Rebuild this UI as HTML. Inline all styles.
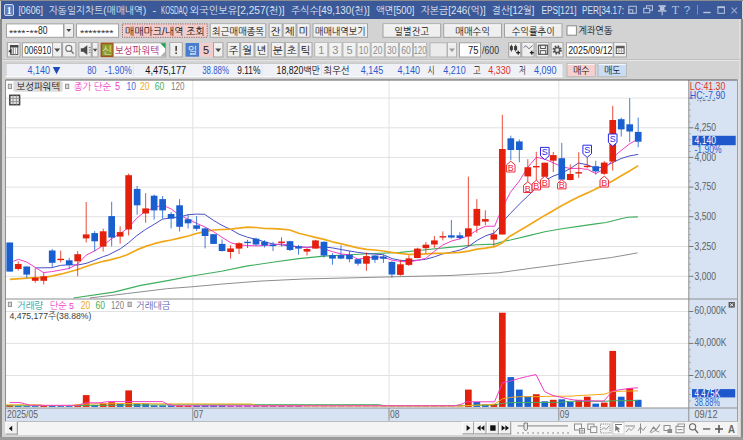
<!DOCTYPE html>
<html lang="ko"><head><meta charset="utf-8"><title>[0606] 자동일지차트(매매내역)</title>
<style>
html,body{margin:0;padding:0;background:#d3d3d3;overflow:hidden}
svg{display:block;font-family:'Liberation Sans','NanumGothic','Noto Sans CJK KR',sans-serif;}
text{white-space:pre}
</style></head><body>
<svg width="743" height="440" viewBox="0 0 743 440">
<rect x="0.00" y="0.00" width="743.00" height="440.00" fill="#d3d3d3" />
<rect x="0.00" y="0.00" width="743.00" height="1.00" fill="#8c8c8c" />
<rect x="1.00" y="1.00" width="741.00" height="18.00" fill="#3b5998" />
<rect x="0.00" y="19.00" width="2.00" height="421.00" fill="#8a8a8a" />
<rect x="739.40" y="19.00" width="1.40" height="418.00" fill="#e6e6e6" />
<rect x="740.80" y="19.00" width="2.20" height="421.00" fill="#8a8a8a" />
<rect x="0.00" y="437.00" width="743.00" height="3.00" fill="#9a9a9a" />
<rect x="4.50" y="4.50" width="9.00" height="11.00" fill="#5f7fc0" stroke="#c9d4ec" stroke-width="1" rx="1.5"/>
<text x="9.00" y="13.80" font-size="9.5" fill="#ffffff" text-anchor="middle" font-weight="bold" font-family="Liberation Serif,serif">1</text>
<text x="18.40" y="14.00" font-size="11" fill="#dde3f1" textLength="24.60" lengthAdjust="spacingAndGlyphs" >[0606]</text>
<text x="48.70" y="14.00" font-size="10.23" fill="#dde3f1" textLength="97.50" lengthAdjust="spacingAndGlyphs" >자동일지차트(매매내역)</text>
<text x="152.50" y="14.00" font-size="11" fill="#dde3f1" >-</text>
<text x="161.00" y="14.00" font-size="11" fill="#dde3f1" textLength="26.50" lengthAdjust="spacingAndGlyphs" >KOSDAQ</text>
<text x="189.70" y="14.00" font-size="10.23" fill="#dde3f1" textLength="95.00" lengthAdjust="spacingAndGlyphs" >외국인보유[2,257(천)]</text>
<text x="291.00" y="14.00" font-size="10.23" fill="#dde3f1" textLength="78.70" lengthAdjust="spacingAndGlyphs" >주식수[49,130(천)]</text>
<text x="375.70" y="14.00" font-size="10.23" fill="#dde3f1" textLength="38.80" lengthAdjust="spacingAndGlyphs" >액면[500]</text>
<text x="420.70" y="14.00" font-size="10.23" fill="#dde3f1" textLength="65.00" lengthAdjust="spacingAndGlyphs" >자본금[246(억)]</text>
<text x="492.00" y="14.00" font-size="10.23" fill="#dde3f1" textLength="42.50" lengthAdjust="spacingAndGlyphs" >결산[12월]</text>
<text x="541.50" y="14.00" font-size="11" fill="#dde3f1" textLength="35.00" lengthAdjust="spacingAndGlyphs" >EPS[121]</text>
<text x="582.00" y="14.00" font-size="11" fill="#dde3f1" textLength="42.00" lengthAdjust="spacingAndGlyphs" >PER[34.17:</text>
<rect x="628.80" y="6.30" width="7.50" height="7.00" fill="none" stroke="#b7c3de" stroke-width="1" />
<rect x="628.80" y="9.80" width="4.00" height="3.50" fill="none" stroke="#b7c3de" stroke-width="1" />
<rect x="646.50" y="5.80" width="6.00" height="4.50" fill="none" stroke="#b7c3de" stroke-width="1" />
<rect x="643.70" y="8.30" width="6.00" height="4.50" fill="#3b5998" stroke="#b7c3de" stroke-width="1" />
<rect x="658.60" y="5.20" width="7.20" height="1.70" fill="#b7c3de" />
<rect x="659.90" y="6.90" width="4.60" height="3.40" fill="#b7c3de" />
<rect x="658.00" y="10.20" width="8.40" height="1.50" fill="#b7c3de" />
<line x1="662.20" y1="11.50" x2="662.20" y2="15.20" stroke="#b7c3de" stroke-width="1.1" />
<text x="675.30" y="14.20" font-size="12" fill="#b7c3de" text-anchor="middle" font-family="Liberation Serif,serif">T</text>
<text x="687.00" y="14.00" font-size="11.5" fill="#b7c3de" text-anchor="middle" >?</text>
<line x1="697.50" y1="5.00" x2="697.50" y2="14.60" stroke="#7d90bd" stroke-width="1" />
<rect x="703.30" y="11.80" width="7.40" height="1.40" fill="#b7c3de" />
<rect x="717.90" y="7.00" width="6.50" height="6.30" fill="none" stroke="#b7c3de" stroke-width="1" />
<rect x="717.40" y="6.50" width="7.50" height="1.60" fill="#b7c3de" />
<line x1="731.50" y1="7.60" x2="737.00" y2="13.40" stroke="#9aaad0" stroke-width="1.1" />
<line x1="737.00" y1="7.60" x2="731.50" y2="13.40" stroke="#9aaad0" stroke-width="1.1" />
<rect x="6.50" y="23.90" width="57.00" height="13.40" fill="#ffffff" stroke="#a2a2a2" stroke-width="1" />
<text x="9.00" y="35.60" font-size="9.5" fill="#333" textLength="16.50" lengthAdjust="spacingAndGlyphs" >****</text>
<text x="26.00" y="33.60" font-size="10" fill="#333" >-</text>
<text x="29.60" y="35.60" font-size="9.5" fill="#333" textLength="8.20" lengthAdjust="spacingAndGlyphs" >**</text>
<text x="38.00" y="33.80" font-size="11" fill="#222" textLength="9.50" lengthAdjust="spacingAndGlyphs" >80</text>
<rect x="64.00" y="23.90" width="9.50" height="13.40" fill="#efefef" stroke="#a2a2a2" stroke-width="1" />
<line x1="64.70" y1="24.90" x2="72.80" y2="24.90" stroke="#fbfbfb" stroke-width="1" />
<polygon points="66.3,29.0 71.3,29.0 68.8,32.0" fill="#444" />
<rect x="76.50" y="23.90" width="42.00" height="13.40" fill="#ffffff" stroke="#a2a2a2" stroke-width="1" />
<text x="80.00" y="35.60" font-size="9.5" fill="#333" textLength="33.50" lengthAdjust="spacingAndGlyphs" >********</text>
<rect x="122.50" y="23.90" width="84.70" height="13.40" fill="#f3cccc" stroke="#8a6666" stroke-width="1" stroke-dasharray="1.2,1.2"/>
<text x="164.85" y="34.56" font-size="10.23" fill="#111" text-anchor="middle" textLength="80.00" lengthAdjust="spacingAndGlyphs" >매매마크/내역 조회</text>
<rect x="210.20" y="23.90" width="55.60" height="13.40" fill="#efefef" stroke="#a2a2a2" stroke-width="1" />
<line x1="210.90" y1="24.90" x2="265.10" y2="24.90" stroke="#fbfbfb" stroke-width="1" />
<text x="238.00" y="34.56" font-size="10.23" fill="#111" text-anchor="middle" textLength="52.00" lengthAdjust="spacingAndGlyphs" >최근매매종목</text>
<rect x="269.10" y="23.90" width="13.00" height="13.40" fill="#efefef" stroke="#a2a2a2" stroke-width="1" />
<line x1="269.80" y1="24.90" x2="281.40" y2="24.90" stroke="#fbfbfb" stroke-width="1" />
<text x="275.60" y="34.56" font-size="10.23" fill="#111" text-anchor="middle" textLength="10.00" lengthAdjust="spacingAndGlyphs" >잔</text>
<rect x="283.10" y="23.90" width="12.90" height="13.40" fill="#efefef" stroke="#a2a2a2" stroke-width="1" />
<line x1="283.80" y1="24.90" x2="295.30" y2="24.90" stroke="#fbfbfb" stroke-width="1" />
<text x="289.55" y="34.56" font-size="10.23" fill="#111" text-anchor="middle" textLength="10.00" lengthAdjust="spacingAndGlyphs" >체</text>
<rect x="297.00" y="23.90" width="13.00" height="13.40" fill="#efefef" stroke="#a2a2a2" stroke-width="1" />
<line x1="297.70" y1="24.90" x2="309.30" y2="24.90" stroke="#fbfbfb" stroke-width="1" />
<text x="303.50" y="34.56" font-size="10.23" fill="#111" text-anchor="middle" textLength="10.00" lengthAdjust="spacingAndGlyphs" >미</text>
<rect x="313.00" y="23.90" width="54.50" height="13.40" fill="#efefef" stroke="#a2a2a2" stroke-width="1" />
<line x1="313.70" y1="24.90" x2="366.80" y2="24.90" stroke="#fbfbfb" stroke-width="1" />
<text x="340.25" y="34.56" font-size="10.23" fill="#111" text-anchor="middle" textLength="51.00" lengthAdjust="spacingAndGlyphs" >매매내역보기</text>
<rect x="383.00" y="23.90" width="57.70" height="13.40" fill="#efefef" stroke="#a2a2a2" stroke-width="1" />
<line x1="383.70" y1="24.90" x2="440.00" y2="24.90" stroke="#fbfbfb" stroke-width="1" />
<text x="411.85" y="34.56" font-size="10.23" fill="#111" text-anchor="middle" textLength="35.00" lengthAdjust="spacingAndGlyphs" >일별잔고</text>
<rect x="443.70" y="23.90" width="57.80" height="13.40" fill="#efefef" stroke="#a2a2a2" stroke-width="1" />
<line x1="444.40" y1="24.90" x2="500.80" y2="24.90" stroke="#fbfbfb" stroke-width="1" />
<text x="472.60" y="34.56" font-size="10.23" fill="#111" text-anchor="middle" textLength="35.00" lengthAdjust="spacingAndGlyphs" >매매수익</text>
<rect x="504.50" y="23.90" width="57.50" height="13.40" fill="#efefef" stroke="#a2a2a2" stroke-width="1" />
<line x1="505.20" y1="24.90" x2="561.30" y2="24.90" stroke="#fbfbfb" stroke-width="1" />
<text x="533.25" y="34.56" font-size="10.23" fill="#111" text-anchor="middle" textLength="43.00" lengthAdjust="spacingAndGlyphs" >수익률추이</text>
<rect x="567.00" y="25.80" width="9.40" height="9.40" fill="#ffffff" stroke="#8a8a8a" stroke-width="1" />
<text x="578.20" y="34.00" font-size="10.23" fill="#111" textLength="34.30" lengthAdjust="spacingAndGlyphs" >계좌연동</text>
<rect x="7.30" y="42.80" width="12.70" height="14.20" fill="#efefef" stroke="#a2a2a2" stroke-width="1" />
<line x1="8.00" y1="43.80" x2="19.30" y2="43.80" stroke="#fbfbfb" stroke-width="1" />
<rect x="10.60" y="45.60" width="7.20" height="9.00" fill="#fbfbfb" stroke="#555" stroke-width="1" />
<rect x="10.10" y="45.10" width="8.20" height="2.40" fill="#444" />
<line x1="13.20" y1="47.50" x2="13.20" y2="54.60" stroke="#666" stroke-width="1" />
<line x1="15.50" y1="47.50" x2="15.50" y2="54.60" stroke="#999" stroke-width="0.8" />
<polygon points="8.3,51.2 11.6,48.6 11.6,53.8" fill="#333" />
<rect x="22.50" y="42.80" width="30.00" height="14.20" fill="#ffffff" stroke="#a2a2a2" stroke-width="1" />
<text x="24.30" y="53.90" font-size="11" fill="#222" textLength="27.00" lengthAdjust="spacingAndGlyphs" >006910</text>
<rect x="52.60" y="42.80" width="9.00" height="14.20" fill="#efefef" stroke="#a2a2a2" stroke-width="1" />
<line x1="53.30" y1="43.80" x2="60.90" y2="43.80" stroke="#fbfbfb" stroke-width="1" />
<polygon points="54.2,48.5 60.2,48.5 57.2,51.9" fill="#4a4a4a" />
<rect x="62.60" y="42.80" width="13.30" height="14.20" fill="#efefef" stroke="#a2a2a2" stroke-width="1" />
<line x1="63.30" y1="43.80" x2="75.20" y2="43.80" stroke="#fbfbfb" stroke-width="1" />
<circle cx="68.8" cy="48.4" r="3" fill="#fafafa" stroke="#7d7d7d" stroke-width="1.2"/>
<line x1="71.00" y1="50.80" x2="73.60" y2="53.80" stroke="#7d7d7d" stroke-width="1.6" />
<rect x="78.90" y="42.80" width="12.30" height="14.20" fill="#efefef" stroke="#a2a2a2" stroke-width="1" />
<line x1="79.60" y1="43.80" x2="90.50" y2="43.80" stroke="#fbfbfb" stroke-width="1" />
<polygon points="80.8,48.3 83.3,48.3 87.3,45.2 87.3,54.9 83.3,51.8 80.8,51.8" fill="#4a4a4a" />
<line x1="88.80" y1="47.60" x2="90.60" y2="47.60" stroke="#777" stroke-width="1" />
<line x1="88.80" y1="50.00" x2="90.60" y2="50.00" stroke="#777" stroke-width="1" />
<line x1="88.80" y1="52.40" x2="90.60" y2="52.40" stroke="#777" stroke-width="1" />
<rect x="92.20" y="42.80" width="5.80" height="14.20" fill="#efefef" stroke="#a2a2a2" stroke-width="1" />
<line x1="92.90" y1="43.80" x2="97.30" y2="43.80" stroke="#fbfbfb" stroke-width="1" />
<polygon points="92.8,48.7 97.4,48.7 95.1,51.7" fill="#4a4a4a" />
<rect x="101.40" y="43.40" width="11.80" height="13.00" fill="#8c9c32" stroke="#a0521c" stroke-width="1.6" />
<text x="107.30" y="53.70" font-size="10.23" fill="#e2eab8" text-anchor="middle" >신</text>
<rect x="113.60" y="42.80" width="52.00" height="14.20" fill="#ffffff" stroke="#a2a2a2" stroke-width="1" />
<text x="115.00" y="53.80" font-size="10.23" fill="#a81860" textLength="44.00" lengthAdjust="spacingAndGlyphs" >보성파워텍</text>
<polygon points="160.3,43.3 165.3,43.3 165.3,48.5" fill="#19a04a" />
<polygon points="165.3,51.3 165.3,56.5 160.3,56.5" fill="#b4b4b4" />
<rect x="169.80" y="42.80" width="12.50" height="14.20" fill="#efefef" stroke="#a2a2a2" stroke-width="1" />
<line x1="170.50" y1="43.80" x2="181.60" y2="43.80" stroke="#fbfbfb" stroke-width="1" />
<rect x="175.40" y="46.00" width="1.50" height="5.20" fill="#333" />
<rect x="175.40" y="52.40" width="1.50" height="1.60" fill="#333" />
<text x="176.10" y="53.00" font-size="3" fill="#efefef" text-anchor="middle" >!</text>
<rect x="185.50" y="43.00" width="13.80" height="13.70" fill="#4a7ccc" />
<text x="192.40" y="53.70" font-size="10.04" fill="#ffffff" text-anchor="middle" >일</text>
<rect x="199.30" y="43.00" width="13.70" height="13.70" fill="#f3cccc" />
<text x="206.10" y="53.90" font-size="11" fill="#222" text-anchor="middle" >5</text>
<rect x="213.50" y="42.80" width="9.40" height="14.20" fill="#efefef" stroke="#a2a2a2" stroke-width="1" />
<line x1="214.20" y1="43.80" x2="222.20" y2="43.80" stroke="#fbfbfb" stroke-width="1" />
<polygon points="215.2,48.5 221.2,48.5 218.2,51.9" fill="#4a4a4a" />
<rect x="227.20" y="42.80" width="12.50" height="14.20" fill="#efefef" stroke="#a2a2a2" stroke-width="1" />
<line x1="227.90" y1="43.80" x2="239.00" y2="43.80" stroke="#fbfbfb" stroke-width="1" />
<text x="233.45" y="53.86" font-size="10.23" fill="#111" text-anchor="middle" textLength="10.00" lengthAdjust="spacingAndGlyphs" >주</text>
<rect x="240.70" y="42.80" width="13.30" height="14.20" fill="#efefef" stroke="#a2a2a2" stroke-width="1" />
<line x1="241.40" y1="43.80" x2="253.30" y2="43.80" stroke="#fbfbfb" stroke-width="1" />
<text x="247.35" y="53.86" font-size="10.23" fill="#111" text-anchor="middle" textLength="10.00" lengthAdjust="spacingAndGlyphs" >월</text>
<rect x="255.00" y="42.80" width="13.00" height="14.20" fill="#efefef" stroke="#a2a2a2" stroke-width="1" />
<line x1="255.70" y1="43.80" x2="267.30" y2="43.80" stroke="#fbfbfb" stroke-width="1" />
<text x="261.50" y="53.86" font-size="10.23" fill="#111" text-anchor="middle" textLength="10.00" lengthAdjust="spacingAndGlyphs" >년</text>
<rect x="271.30" y="42.80" width="13.00" height="14.20" fill="#efefef" stroke="#a2a2a2" stroke-width="1" />
<line x1="272.00" y1="43.80" x2="283.60" y2="43.80" stroke="#fbfbfb" stroke-width="1" />
<text x="277.80" y="53.86" font-size="10.23" fill="#111" text-anchor="middle" textLength="10.00" lengthAdjust="spacingAndGlyphs" >분</text>
<rect x="285.30" y="42.80" width="12.90" height="14.20" fill="#efefef" stroke="#a2a2a2" stroke-width="1" />
<line x1="286.00" y1="43.80" x2="297.50" y2="43.80" stroke="#fbfbfb" stroke-width="1" />
<text x="291.75" y="53.86" font-size="10.23" fill="#111" text-anchor="middle" textLength="10.00" lengthAdjust="spacingAndGlyphs" >초</text>
<rect x="299.20" y="42.80" width="12.80" height="14.20" fill="#efefef" stroke="#a2a2a2" stroke-width="1" />
<line x1="299.90" y1="43.80" x2="311.30" y2="43.80" stroke="#fbfbfb" stroke-width="1" />
<text x="305.60" y="53.86" font-size="10.23" fill="#111" text-anchor="middle" textLength="10.00" lengthAdjust="spacingAndGlyphs" >틱</text>
<rect x="314.70" y="42.80" width="13.12" height="14.20" fill="#f1f1f1" stroke="#b4b4b4" stroke-width="1" />
<line x1="315.40" y1="43.80" x2="327.12" y2="43.80" stroke="#fbfbfb" stroke-width="1" />
<text x="321.26" y="53.86" font-size="11" fill="#8c8c8c" text-anchor="middle" >1</text>
<rect x="328.82" y="42.80" width="13.12" height="14.20" fill="#f1f1f1" stroke="#b4b4b4" stroke-width="1" />
<line x1="329.52" y1="43.80" x2="341.24" y2="43.80" stroke="#fbfbfb" stroke-width="1" />
<text x="335.38" y="53.86" font-size="11" fill="#8c8c8c" text-anchor="middle" >3</text>
<rect x="342.94" y="42.80" width="13.12" height="14.20" fill="#f1f1f1" stroke="#b4b4b4" stroke-width="1" />
<line x1="343.64" y1="43.80" x2="355.36" y2="43.80" stroke="#fbfbfb" stroke-width="1" />
<text x="349.50" y="53.86" font-size="11" fill="#8c8c8c" text-anchor="middle" >5</text>
<rect x="357.06" y="42.80" width="13.12" height="14.20" fill="#f1f1f1" stroke="#b4b4b4" stroke-width="1" />
<line x1="357.76" y1="43.80" x2="369.48" y2="43.80" stroke="#fbfbfb" stroke-width="1" />
<text x="363.62" y="53.86" font-size="11" fill="#8c8c8c" text-anchor="middle" textLength="9.50" lengthAdjust="spacingAndGlyphs" >10</text>
<rect x="371.18" y="42.80" width="13.12" height="14.20" fill="#f1f1f1" stroke="#b4b4b4" stroke-width="1" />
<line x1="371.88" y1="43.80" x2="383.60" y2="43.80" stroke="#fbfbfb" stroke-width="1" />
<text x="377.74" y="53.86" font-size="11" fill="#8c8c8c" text-anchor="middle" textLength="9.50" lengthAdjust="spacingAndGlyphs" >20</text>
<rect x="385.30" y="42.80" width="13.12" height="14.20" fill="#f1f1f1" stroke="#b4b4b4" stroke-width="1" />
<line x1="386.00" y1="43.80" x2="397.72" y2="43.80" stroke="#fbfbfb" stroke-width="1" />
<text x="391.86" y="53.86" font-size="11" fill="#8c8c8c" text-anchor="middle" textLength="9.50" lengthAdjust="spacingAndGlyphs" >30</text>
<rect x="399.42" y="42.80" width="13.12" height="14.20" fill="#f1f1f1" stroke="#b4b4b4" stroke-width="1" />
<line x1="400.12" y1="43.80" x2="411.84" y2="43.80" stroke="#fbfbfb" stroke-width="1" />
<text x="405.98" y="53.86" font-size="11" fill="#8c8c8c" text-anchor="middle" textLength="9.50" lengthAdjust="spacingAndGlyphs" >60</text>
<rect x="413.54" y="42.80" width="13.12" height="14.20" fill="#f1f1f1" stroke="#b4b4b4" stroke-width="1" />
<line x1="414.24" y1="43.80" x2="425.96" y2="43.80" stroke="#fbfbfb" stroke-width="1" />
<text x="420.10" y="53.86" font-size="11" fill="#8c8c8c" text-anchor="middle" textLength="12.50" lengthAdjust="spacingAndGlyphs" >120</text>
<rect x="430.00" y="42.80" width="17.00" height="14.20" fill="#ebebeb" stroke="#b4b4b4" stroke-width="1" />
<rect x="447.50" y="42.80" width="9.00" height="14.20" fill="#eeeeee" stroke="#b4b4b4" stroke-width="1" />
<line x1="448.20" y1="43.80" x2="455.80" y2="43.80" stroke="#fbfbfb" stroke-width="1" />
<polygon points="449.0,48.5 455.0,48.5 452.0,51.9" fill="#9a9a9a" />
<rect x="459.50" y="42.80" width="21.00" height="14.20" fill="#ffffff" stroke="#a2a2a2" stroke-width="1" />
<text x="478.50" y="53.90" font-size="11" fill="#222" text-anchor="end" textLength="10.50" lengthAdjust="spacingAndGlyphs" >75</text>
<text x="482.00" y="53.90" font-size="11" fill="#333" textLength="17.00" lengthAdjust="spacingAndGlyphs" >/600</text>
<rect x="508.70" y="42.80" width="12.10" height="14.20" fill="#efefef" stroke="#a2a2a2" stroke-width="1" />
<line x1="509.40" y1="43.80" x2="520.10" y2="43.80" stroke="#fbfbfb" stroke-width="1" />
<rect x="521.80" y="42.80" width="12.20" height="14.20" fill="#efefef" stroke="#a2a2a2" stroke-width="1" />
<line x1="522.50" y1="43.80" x2="533.30" y2="43.80" stroke="#fbfbfb" stroke-width="1" />
<rect x="536.10" y="42.80" width="12.80" height="14.20" fill="#efefef" stroke="#a2a2a2" stroke-width="1" />
<line x1="536.80" y1="43.80" x2="548.20" y2="43.80" stroke="#fbfbfb" stroke-width="1" />
<rect x="551.10" y="42.80" width="11.90" height="14.20" fill="#efefef" stroke="#a2a2a2" stroke-width="1" />
<line x1="551.80" y1="43.80" x2="562.30" y2="43.80" stroke="#fbfbfb" stroke-width="1" />
<line x1="511.40" y1="44.70" x2="511.40" y2="51.60" stroke="#444" stroke-width="1" />
<rect x="509.90" y="46.10" width="3.00" height="4.00" fill="#3c3c3c" />
<line x1="515.60" y1="44.70" x2="515.60" y2="51.60" stroke="#444" stroke-width="1" />
<rect x="514.10" y="46.10" width="3.00" height="4.00" fill="#3c3c3c" />
<rect x="516.20" y="52.00" width="4.00" height="1.30" fill="#222" />
<rect x="517.55" y="50.65" width="1.30" height="4.00" fill="#222" />
<polyline points="523.6,47.6 526.0,45.6 528.9,48.8 532.6,45.6" fill="none" stroke="#6c7890" stroke-width="1" stroke-linejoin="round" />
<rect x="529.80" y="52.00" width="4.00" height="1.30" fill="#222" />
<rect x="531.15" y="50.65" width="1.30" height="4.00" fill="#222" />
<rect x="538.50" y="45.30" width="9.00" height="9.00" fill="#f2f2f2" stroke="#5a5a5a" stroke-width="1.3" />
<rect x="540.60" y="45.30" width="4.80" height="3.20" fill="#f2f2f2" stroke="#5a5a5a" stroke-width="1" />
<rect x="540.30" y="50.60" width="5.40" height="3.70" fill="#f2f2f2" stroke="#5a5a5a" stroke-width="1" />
<circle cx="557.2" cy="50" r="3.6" fill="none" stroke="#555" stroke-width="2.2" stroke-dasharray="1.5,1.33"/>
<circle cx="557.2" cy="50" r="2.6" fill="#e4e4e4" stroke="#555" stroke-width="1.5"/>
<rect x="566.50" y="42.80" width="46.70" height="14.20" fill="#ffffff" stroke="#a2a2a2" stroke-width="1" />
<text x="568.20" y="53.90" font-size="11" fill="#222" textLength="44.30" lengthAdjust="spacingAndGlyphs" >2025/09/12</text>
<rect x="613.70" y="42.80" width="12.80" height="14.20" fill="#efefef" stroke="#a2a2a2" stroke-width="1" />
<line x1="614.40" y1="43.80" x2="625.80" y2="43.80" stroke="#fbfbfb" stroke-width="1" />
<rect x="616.30" y="46.30" width="7.80" height="7.20" fill="#fafafa" stroke="#555" stroke-width="1" />
<rect x="616.30" y="46.30" width="7.80" height="2.00" fill="#555" />
<line x1="618.90" y1="48.30" x2="618.90" y2="53.50" stroke="#999" stroke-width="0.7" />
<line x1="621.50" y1="48.30" x2="621.50" y2="53.50" stroke="#999" stroke-width="0.7" />
<line x1="616.30" y1="50.90" x2="624.10" y2="50.90" stroke="#999" stroke-width="0.7" />
<line x1="2.00" y1="59.50" x2="740.00" y2="59.50" stroke="#bfbfbf" stroke-width="1" />
<line x1="2.00" y1="60.50" x2="740.00" y2="60.50" stroke="#e6e6e6" stroke-width="1" />
<rect x="5.50" y="62.90" width="557.00" height="14.30" fill="#f0f1f6" />
<line x1="5.50" y1="63.40" x2="562.50" y2="63.40" stroke="#c4c4c8" stroke-width="1" />
<line x1="6.00" y1="62.90" x2="6.00" y2="77.20" stroke="#c4c4c8" stroke-width="1" />
<line x1="5.50" y1="76.70" x2="562.50" y2="76.70" stroke="#fbfbfd" stroke-width="1" />
<text x="50.00" y="74.00" font-size="11" fill="#2a5bd0" text-anchor="end" textLength="22.50" lengthAdjust="spacingAndGlyphs" >4,140</text>
<polygon points="52.8,67.0 60.3,67.0 56.5,74.3" fill="#1f49b8" />
<text x="96.40" y="74.00" font-size="11" fill="#2a5bd0" text-anchor="end" textLength="9.20" lengthAdjust="spacingAndGlyphs" >80</text>
<text x="131.80" y="74.00" font-size="11" fill="#2a5bd0" text-anchor="end" textLength="27.00" lengthAdjust="spacingAndGlyphs" >-1.90%</text>
<line x1="133.50" y1="63.90" x2="133.50" y2="76.20" stroke="#dfe4ee" stroke-width="1" />
<text x="186.10" y="74.00" font-size="11" fill="#111" text-anchor="end" textLength="40.80" lengthAdjust="spacingAndGlyphs" >4,475,177</text>
<text x="229.00" y="74.00" font-size="11" fill="#2a5bd0" text-anchor="end" textLength="26.80" lengthAdjust="spacingAndGlyphs" >38.88%</text>
<text x="260.30" y="74.00" font-size="11" fill="#111" text-anchor="end" textLength="23.00" lengthAdjust="spacingAndGlyphs" >9.11%</text>
<line x1="262.00" y1="63.90" x2="262.00" y2="76.20" stroke="#dfe4ee" stroke-width="1" />
<text x="319.80" y="74.00" font-size="10.23" fill="#111" text-anchor="end" textLength="43.30" lengthAdjust="spacingAndGlyphs" >18,820백만</text>
<line x1="321.50" y1="63.90" x2="321.50" y2="76.20" stroke="#dfe4ee" stroke-width="1" />
<text x="323.50" y="74.00" font-size="10.23" fill="#111" textLength="26.30" lengthAdjust="spacingAndGlyphs" >최우선</text>
<text x="383.30" y="74.00" font-size="11" fill="#2a5bd0" text-anchor="end" textLength="22.50" lengthAdjust="spacingAndGlyphs" >4,145</text>
<text x="420.00" y="74.00" font-size="11" fill="#2a5bd0" text-anchor="end" textLength="22.50" lengthAdjust="spacingAndGlyphs" >4,140</text>
<text x="427.50" y="74.00" font-size="10.23" fill="#111" textLength="7.30" lengthAdjust="spacingAndGlyphs" >시</text>
<text x="465.80" y="74.00" font-size="11" fill="#2a5bd0" text-anchor="end" textLength="22.50" lengthAdjust="spacingAndGlyphs" >4,210</text>
<text x="473.20" y="74.00" font-size="10.23" fill="#111" textLength="7.50" lengthAdjust="spacingAndGlyphs" >고</text>
<text x="510.80" y="74.00" font-size="11" fill="#e0301e" text-anchor="end" textLength="22.50" lengthAdjust="spacingAndGlyphs" >4,330</text>
<text x="519.00" y="74.00" font-size="10.23" fill="#111" textLength="7.00" lengthAdjust="spacingAndGlyphs" >저</text>
<text x="556.60" y="74.00" font-size="11" fill="#2a5bd0" text-anchor="end" textLength="22.50" lengthAdjust="spacingAndGlyphs" >4,090</text>
<rect x="567.00" y="63.40" width="28.30" height="13.30" fill="#f6cfcf" stroke="#b9b9b9" stroke-width="1" />
<line x1="567.70" y1="64.40" x2="594.60" y2="64.40" stroke="#fbfbfb" stroke-width="1" />
<text x="581.15" y="74.01" font-size="10.23" fill="#111" text-anchor="middle" textLength="16.50" lengthAdjust="spacingAndGlyphs" >매수</text>
<rect x="598.00" y="63.40" width="28.50" height="13.30" fill="#c9dcf5" stroke="#b9b9b9" stroke-width="1" />
<line x1="598.70" y1="64.40" x2="625.80" y2="64.40" stroke="#fbfbfb" stroke-width="1" />
<text x="612.25" y="74.01" font-size="10.23" fill="#111" text-anchor="middle" textLength="16.50" lengthAdjust="spacingAndGlyphs" >매도</text>
<rect x="5.50" y="80.00" width="683.30" height="328.00" fill="#ffffff" />
<rect x="688.80" y="80.00" width="48.70" height="341.60" fill="#d7e3f2" />
<rect x="5.50" y="408.00" width="683.30" height="13.60" fill="#d7e3f2" />
<rect x="737.50" y="80.00" width="2.50" height="355.60" fill="#e0e0e0" />
<line x1="5.50" y1="98.10" x2="688.80" y2="98.10" stroke="#e2e2e2" stroke-width="1" />
<line x1="5.50" y1="127.80" x2="688.80" y2="127.80" stroke="#e2e2e2" stroke-width="1" />
<line x1="5.50" y1="157.40" x2="688.80" y2="157.40" stroke="#e2e2e2" stroke-width="1" />
<line x1="5.50" y1="187.10" x2="688.80" y2="187.10" stroke="#e2e2e2" stroke-width="1" />
<line x1="5.50" y1="216.70" x2="688.80" y2="216.70" stroke="#e2e2e2" stroke-width="1" />
<line x1="5.50" y1="246.50" x2="688.80" y2="246.50" stroke="#e2e2e2" stroke-width="1" />
<line x1="5.50" y1="276.30" x2="688.80" y2="276.30" stroke="#e2e2e2" stroke-width="1" />
<line x1="192.80" y1="80.00" x2="192.80" y2="408.00" stroke="#e2e2e2" stroke-width="1" />
<line x1="389.00" y1="80.00" x2="389.00" y2="408.00" stroke="#e2e2e2" stroke-width="1" />
<line x1="558.80" y1="80.00" x2="558.80" y2="408.00" stroke="#e2e2e2" stroke-width="1" />
<line x1="5.50" y1="311.50" x2="688.80" y2="311.50" stroke="#e2e2e2" stroke-width="1" />
<line x1="5.50" y1="343.40" x2="688.80" y2="343.40" stroke="#e2e2e2" stroke-width="1" />
<line x1="5.50" y1="375.50" x2="688.80" y2="375.50" stroke="#e2e2e2" stroke-width="1" />
<defs><clipPath id="pc"><rect x="5.5" y="80" width="683.3" height="219.0"/></clipPath><clipPath id="vc"><rect x="5.5" y="299.0" width="683.3" height="109.0"/></clipPath></defs>
<polyline points="89.6,298.0 127.3,293.5 167.7,288.6 191.9,286.8 221.5,284.1 260.0,281.1 303.8,279.0 357.7,277.7 390.0,276.9 450.0,275.5 498.5,272.8 530.8,268.3 557.7,264.8 584.6,261.0 611.5,257.5 637.5,252.9" fill="none" stroke="#8e8e8e" stroke-width="1" stroke-linejoin="round" clip-path="url(#pc)"/>
<polyline points="73.5,298.0 113.8,292.1 140.8,285.4 167.7,280.6 191.9,276.0 221.5,271.2 247.6,265.9 272.7,262.3 298.7,258.6 324.0,256.1 349.6,254.7 374.8,253.5 400.3,252.4 425.7,249.8 451.6,247.1 477.2,244.7 494.6,244.1 505.0,241.0 510.4,240.0 527.8,235.9 544.8,231.8 562.0,228.7 578.3,226.4 595.7,223.9 606.1,222.5 621.0,218.8 628.0,217.2 637.8,216.9" fill="none" stroke="#3fae5c" stroke-width="1.1" stroke-linejoin="round" clip-path="url(#pc)"/>
<polyline points="34.8,267.9 51.7,267.7 60.5,265.4 68.9,264.8 77.7,265.0 86.1,263.4 94.3,260.3 103.3,256.6 108.2,255.0 120.4,248.8 128.6,242.7 136.8,235.6 145.6,229.4 154.2,224.3 162.4,219.2 171.2,217.8 179.3,217.1 188.3,214.7 196.5,214.1 204.6,214.3 213.4,220.3 222.0,225.4 230.8,229.5 239.0,234.2 247.6,237.3 256.3,239.4 264.5,241.8 272.7,243.9 281.5,244.9 289.7,245.9 298.7,246.9 306.9,247.3 315.4,246.9 324.0,246.9 332.4,247.9 341.6,249.6 349.6,251.0 357.8,252.4 366.6,253.5 374.8,254.1 383.3,254.7 392.1,258.6 400.4,260.3 408.9,260.8 417.5,260.2 425.7,259.3 434.5,256.8 442.6,253.9 451.6,252.1 460.0,250.0 468.2,246.7 477.2,240.3 485.4,235.9 494.6,232.8 499.0,227.7 505.7,218.5 510.4,213.4 519.3,204.2 527.8,196.0 536.4,187.8 544.8,180.7 553.0,176.2 562.0,173.0 570.4,168.5 578.5,163.0 587.5,164.8 595.7,168.5 604.5,166.6 612.6,162.6 621.2,158.5 630.0,155.8 638.2,154.4" fill="none" stroke="#4a4fc8" stroke-width="1" stroke-linejoin="round" clip-path="url(#pc)"/>
<polyline points="9.8,279.3 26.6,278.1 43.5,277.3 51.7,276.1 60.5,274.2 68.9,272.0 77.7,269.5 86.1,266.5 94.3,263.8 103.3,261.3 110.0,259.9 120.0,257.2 126.6,255.0 136.8,249.9 145.6,246.4 154.2,243.7 162.4,241.7 171.2,240.0 179.3,238.2 188.3,236.0 196.5,233.5 204.6,231.6 213.4,230.0 222.0,229.5 230.8,229.1 239.0,228.1 247.6,227.1 256.3,227.5 264.5,228.5 272.7,228.7 281.5,229.1 289.7,230.0 298.7,233.2 306.9,235.3 315.4,237.3 324.0,239.4 332.4,241.8 341.6,243.9 349.6,245.9 357.8,247.9 366.6,249.4 374.8,250.0 383.3,251.0 392.1,252.4 400.3,253.5 408.9,254.3 417.5,254.3 425.7,253.9 434.5,253.3 442.6,253.3 451.6,252.9 460.0,252.3 468.2,251.2 477.2,249.2 485.4,248.2 494.6,246.7 502.0,243.1 505.7,239.6 510.4,235.9 519.3,230.8 527.8,225.7 536.4,220.6 544.8,215.4 553.0,210.7 562.0,205.6 570.4,201.1 578.3,197.0 587.5,192.9 595.7,188.9 604.5,185.0 612.6,181.0 621.2,175.8 630.0,170.7 638.2,165.6" fill="none" stroke="#f0a818" stroke-width="1.7" stroke-linejoin="round" clip-path="url(#pc)"/>
<polyline points="13.5,261.3 18.4,259.3 26.6,262.0 35.4,267.5 43.5,272.6 51.7,271.6 60.5,270.1 68.9,268.5 77.7,264.0 86.1,255.2 94.3,251.1 103.3,245.4 111.7,238.6 120.4,233.5 128.6,227.4 136.8,218.2 145.6,211.0 154.2,207.9 162.4,204.9 171.2,209.0 179.3,215.1 188.3,219.2 196.5,223.3 204.6,226.8 213.4,231.6 222.0,237.3 230.8,242.8 239.0,244.9 247.6,245.5 256.3,245.9 264.5,245.5 272.7,244.9 281.5,243.9 289.7,245.3 298.7,246.9 306.9,247.5 315.4,246.5 324.0,249.0 332.4,251.6 341.6,254.1 349.6,254.7 357.8,259.2 366.6,257.8 374.8,257.1 383.3,257.1 392.1,260.2 400.4,261.4 408.9,261.9 417.5,260.4 425.7,258.4 434.5,251.2 442.6,245.1 451.6,241.0 460.0,238.7 468.2,235.8 477.2,230.0 485.4,226.3 494.6,226.2 499.0,215.5 505.7,201.4 510.4,192.3 519.3,181.0 527.8,167.3 536.4,157.2 544.8,159.2 553.0,162.7 562.0,166.8 570.4,168.5 578.5,168.3 587.5,169.4 595.7,173.6 604.5,168.7 612.6,160.5 616.3,154.6 621.2,150.4 630.0,143.6 638.2,139.0" fill="none" stroke="#f03cc8" stroke-width="1" stroke-linejoin="round" clip-path="url(#pc)"/>
<line x1="9.75" y1="242.50" x2="9.75" y2="271.60" stroke="#1a5fd0" stroke-width="1" opacity="0.8"/>
<rect x="6.40" y="242.50" width="6.70" height="29.10" fill="#1a5fd0" />
<line x1="18.24" y1="261.30" x2="18.24" y2="270.50" stroke="#e4200c" stroke-width="1" opacity="0.8"/>
<rect x="14.89" y="264.00" width="6.70" height="5.00" fill="#e4200c" />
<line x1="26.74" y1="266.50" x2="26.74" y2="277.70" stroke="#1a5fd0" stroke-width="1" opacity="0.8"/>
<rect x="23.39" y="266.50" width="6.70" height="8.10" fill="#1a5fd0" />
<line x1="35.23" y1="268.50" x2="35.23" y2="282.80" stroke="#e4200c" stroke-width="1" opacity="0.8"/>
<rect x="31.88" y="277.70" width="6.70" height="3.10" fill="#e4200c" />
<line x1="43.72" y1="272.60" x2="43.72" y2="284.50" stroke="#e4200c" stroke-width="1" opacity="0.8"/>
<rect x="40.37" y="276.30" width="6.70" height="4.50" fill="#e4200c" />
<line x1="52.21" y1="249.00" x2="52.21" y2="267.50" stroke="#1a5fd0" stroke-width="1" opacity="0.8"/>
<rect x="48.86" y="250.50" width="6.70" height="12.30" fill="#1a5fd0" />
<line x1="60.71" y1="250.50" x2="60.71" y2="262.40" stroke="#e4200c" stroke-width="1" opacity="0.8"/>
<rect x="57.36" y="258.75" width="6.70" height="1.40" fill="#e4200c" />
<line x1="69.20" y1="257.90" x2="69.20" y2="269.10" stroke="#1a5fd0" stroke-width="1" opacity="0.8"/>
<rect x="65.85" y="260.30" width="6.70" height="4.70" fill="#1a5fd0" />
<line x1="77.69" y1="251.10" x2="77.69" y2="276.30" stroke="#e4200c" stroke-width="1" opacity="0.8"/>
<rect x="74.34" y="254.20" width="6.70" height="7.10" fill="#e4200c" />
<line x1="86.18" y1="202.00" x2="86.18" y2="242.50" stroke="#e4200c" stroke-width="1" opacity="0.8"/>
<rect x="82.83" y="234.40" width="6.70" height="4.00" fill="#e4200c" />
<line x1="94.68" y1="231.10" x2="94.68" y2="251.10" stroke="#1a5fd0" stroke-width="1" opacity="0.8"/>
<rect x="91.33" y="233.10" width="6.70" height="8.20" fill="#1a5fd0" />
<line x1="103.17" y1="228.60" x2="103.17" y2="251.50" stroke="#e4200c" stroke-width="1" opacity="0.8"/>
<rect x="99.82" y="231.30" width="6.70" height="15.30" fill="#e4200c" />
<line x1="111.66" y1="201.80" x2="111.66" y2="246.40" stroke="#1a5fd0" stroke-width="1" opacity="0.8"/>
<rect x="108.31" y="216.10" width="6.70" height="21.50" fill="#1a5fd0" />
<line x1="120.15" y1="226.30" x2="120.15" y2="243.70" stroke="#e4200c" stroke-width="1" opacity="0.8"/>
<rect x="116.80" y="232.10" width="6.70" height="4.50" fill="#e4200c" />
<line x1="128.65" y1="173.60" x2="128.65" y2="235.50" stroke="#e4200c" stroke-width="1" opacity="0.8"/>
<rect x="125.30" y="175.20" width="6.70" height="54.20" fill="#e4200c" />
<line x1="137.14" y1="186.00" x2="137.14" y2="214.70" stroke="#1a5fd0" stroke-width="1" opacity="0.8"/>
<rect x="133.79" y="188.90" width="6.70" height="16.40" fill="#1a5fd0" />
<line x1="145.63" y1="193.20" x2="145.63" y2="222.70" stroke="#e4200c" stroke-width="1" opacity="0.8"/>
<rect x="142.28" y="208.40" width="6.70" height="5.10" fill="#e4200c" />
<line x1="154.12" y1="194.60" x2="154.12" y2="219.60" stroke="#1a5fd0" stroke-width="1" opacity="0.8"/>
<rect x="150.77" y="195.70" width="6.70" height="14.70" fill="#1a5fd0" />
<line x1="162.62" y1="196.00" x2="162.62" y2="218.60" stroke="#1a5fd0" stroke-width="1" opacity="0.8"/>
<rect x="159.27" y="199.10" width="6.70" height="11.30" fill="#1a5fd0" />
<line x1="171.11" y1="212.00" x2="171.11" y2="228.40" stroke="#1a5fd0" stroke-width="1" opacity="0.8"/>
<rect x="167.76" y="214.00" width="6.70" height="4.60" fill="#1a5fd0" />
<line x1="179.60" y1="199.10" x2="179.60" y2="231.50" stroke="#1a5fd0" stroke-width="1" opacity="0.8"/>
<rect x="176.25" y="205.30" width="6.70" height="21.50" fill="#1a5fd0" />
<line x1="188.09" y1="214.00" x2="188.09" y2="228.40" stroke="#1a5fd0" stroke-width="1" opacity="0.8"/>
<rect x="184.74" y="219.20" width="6.70" height="4.10" fill="#1a5fd0" />
<line x1="196.59" y1="216.10" x2="196.59" y2="230.80" stroke="#1a5fd0" stroke-width="1" opacity="0.8"/>
<rect x="193.24" y="225.30" width="6.70" height="3.50" fill="#1a5fd0" />
<line x1="205.08" y1="227.40" x2="205.08" y2="248.40" stroke="#1a5fd0" stroke-width="1" opacity="0.8"/>
<rect x="201.73" y="228.40" width="6.70" height="7.60" fill="#1a5fd0" />
<line x1="213.57" y1="234.20" x2="213.57" y2="243.90" stroke="#1a5fd0" stroke-width="1" opacity="0.8"/>
<rect x="210.22" y="234.20" width="6.70" height="9.70" fill="#1a5fd0" />
<line x1="222.06" y1="239.40" x2="222.06" y2="251.60" stroke="#1a5fd0" stroke-width="1" opacity="0.8"/>
<rect x="218.72" y="243.90" width="6.70" height="7.10" fill="#1a5fd0" />
<line x1="230.56" y1="245.30" x2="230.56" y2="258.60" stroke="#e4200c" stroke-width="1" opacity="0.8"/>
<rect x="227.21" y="248.40" width="6.70" height="3.60" fill="#e4200c" />
<line x1="239.05" y1="242.40" x2="239.05" y2="254.10" stroke="#e4200c" stroke-width="1" opacity="0.8"/>
<rect x="235.70" y="243.20" width="6.70" height="5.40" fill="#e4200c" />
<line x1="247.54" y1="239.80" x2="247.54" y2="248.00" stroke="#1a5fd0" stroke-width="1" opacity="0.8"/>
<rect x="244.19" y="241.75" width="6.70" height="1.40" fill="#1a5fd0" />
<line x1="256.04" y1="237.70" x2="256.04" y2="245.90" stroke="#1a5fd0" stroke-width="1" opacity="0.8"/>
<rect x="252.69" y="238.70" width="6.70" height="5.80" fill="#1a5fd0" />
<line x1="264.53" y1="240.20" x2="264.53" y2="247.50" stroke="#1a5fd0" stroke-width="1" opacity="0.8"/>
<rect x="261.18" y="241.80" width="6.70" height="3.50" fill="#1a5fd0" />
<line x1="273.02" y1="241.80" x2="273.02" y2="251.00" stroke="#1a5fd0" stroke-width="1" opacity="0.8"/>
<rect x="269.67" y="244.65" width="6.70" height="1.40" fill="#1a5fd0" />
<line x1="281.51" y1="237.30" x2="281.51" y2="246.50" stroke="#e4200c" stroke-width="1" opacity="0.8"/>
<rect x="278.16" y="241.55" width="6.70" height="1.40" fill="#e4200c" />
<line x1="290.01" y1="240.80" x2="290.01" y2="251.00" stroke="#1a5fd0" stroke-width="1" opacity="0.8"/>
<rect x="286.66" y="241.20" width="6.70" height="8.80" fill="#1a5fd0" />
<line x1="298.50" y1="244.90" x2="298.50" y2="254.70" stroke="#1a5fd0" stroke-width="1" opacity="0.8"/>
<rect x="295.15" y="246.30" width="6.70" height="2.30" fill="#1a5fd0" />
<line x1="306.99" y1="247.90" x2="306.99" y2="255.50" stroke="#e4200c" stroke-width="1" opacity="0.8"/>
<rect x="303.64" y="249.00" width="6.70" height="2.60" fill="#e4200c" />
<line x1="315.48" y1="239.80" x2="315.48" y2="248.60" stroke="#e4200c" stroke-width="1" opacity="0.8"/>
<rect x="312.13" y="240.40" width="6.70" height="8.20" fill="#e4200c" />
<line x1="323.98" y1="241.40" x2="323.98" y2="257.60" stroke="#1a5fd0" stroke-width="1" opacity="0.8"/>
<rect x="320.63" y="241.80" width="6.70" height="13.70" fill="#1a5fd0" />
<line x1="332.47" y1="253.10" x2="332.47" y2="264.70" stroke="#1a5fd0" stroke-width="1" opacity="0.8"/>
<rect x="329.12" y="255.10" width="6.70" height="3.50" fill="#1a5fd0" />
<line x1="340.96" y1="245.30" x2="340.96" y2="259.20" stroke="#1a5fd0" stroke-width="1" opacity="0.8"/>
<rect x="337.61" y="255.10" width="6.70" height="3.50" fill="#1a5fd0" />
<line x1="349.45" y1="251.00" x2="349.45" y2="262.30" stroke="#1a5fd0" stroke-width="1" opacity="0.8"/>
<rect x="346.10" y="254.70" width="6.70" height="4.50" fill="#1a5fd0" />
<line x1="357.95" y1="258.60" x2="357.95" y2="265.70" stroke="#1a5fd0" stroke-width="1" opacity="0.8"/>
<rect x="354.60" y="259.20" width="6.70" height="4.50" fill="#1a5fd0" />
<line x1="366.44" y1="252.40" x2="366.44" y2="270.80" stroke="#e4200c" stroke-width="1" opacity="0.8"/>
<rect x="363.09" y="256.10" width="6.70" height="7.60" fill="#e4200c" />
<line x1="374.93" y1="255.10" x2="374.93" y2="262.90" stroke="#1a5fd0" stroke-width="1" opacity="0.8"/>
<rect x="371.58" y="255.50" width="6.70" height="4.30" fill="#1a5fd0" />
<line x1="383.42" y1="254.70" x2="383.42" y2="262.90" stroke="#1a5fd0" stroke-width="1" opacity="0.8"/>
<rect x="380.07" y="256.50" width="6.70" height="2.30" fill="#1a5fd0" />
<line x1="391.92" y1="261.20" x2="391.92" y2="277.60" stroke="#1a5fd0" stroke-width="1" opacity="0.8"/>
<rect x="388.57" y="261.90" width="6.70" height="12.60" fill="#1a5fd0" />
<line x1="400.41" y1="259.80" x2="400.41" y2="275.60" stroke="#e4200c" stroke-width="1" opacity="0.8"/>
<rect x="397.06" y="264.30" width="6.70" height="10.60" fill="#e4200c" />
<line x1="408.90" y1="255.30" x2="408.90" y2="266.00" stroke="#e4200c" stroke-width="1" opacity="0.8"/>
<rect x="405.55" y="258.40" width="6.70" height="6.50" fill="#e4200c" />
<line x1="417.39" y1="247.80" x2="417.39" y2="258.40" stroke="#e4200c" stroke-width="1" opacity="0.8"/>
<rect x="414.04" y="248.60" width="6.70" height="9.40" fill="#e4200c" />
<line x1="425.89" y1="242.00" x2="425.89" y2="253.30" stroke="#e4200c" stroke-width="1" opacity="0.8"/>
<rect x="422.54" y="244.70" width="6.70" height="3.50" fill="#e4200c" />
<line x1="434.38" y1="235.90" x2="434.38" y2="247.80" stroke="#e4200c" stroke-width="1" opacity="0.8"/>
<rect x="431.03" y="240.40" width="6.70" height="4.10" fill="#e4200c" />
<line x1="442.87" y1="231.40" x2="442.87" y2="240.40" stroke="#e4200c" stroke-width="1" opacity="0.8"/>
<rect x="439.52" y="236.15" width="6.70" height="1.40" fill="#e4200c" />
<line x1="451.37" y1="220.00" x2="451.37" y2="238.60" stroke="#1a5fd0" stroke-width="1" opacity="0.8"/>
<rect x="448.02" y="235.30" width="6.70" height="2.20" fill="#1a5fd0" />
<line x1="459.86" y1="232.20" x2="459.86" y2="239.60" stroke="#1a5fd0" stroke-width="1" opacity="0.8"/>
<rect x="456.51" y="235.30" width="6.70" height="2.70" fill="#1a5fd0" />
<line x1="468.35" y1="176.60" x2="468.35" y2="246.10" stroke="#e4200c" stroke-width="1" opacity="0.8"/>
<rect x="465.00" y="228.30" width="6.70" height="8.20" fill="#e4200c" />
<line x1="476.84" y1="199.10" x2="476.84" y2="232.80" stroke="#e4200c" stroke-width="1" opacity="0.8"/>
<rect x="473.49" y="208.90" width="6.70" height="16.80" fill="#e4200c" />
<line x1="485.34" y1="210.30" x2="485.34" y2="225.30" stroke="#e4200c" stroke-width="1" opacity="0.8"/>
<rect x="481.99" y="219.10" width="6.70" height="2.50" fill="#e4200c" />
<line x1="493.83" y1="229.80" x2="493.83" y2="246.10" stroke="#e4200c" stroke-width="1" opacity="0.8"/>
<rect x="490.48" y="234.30" width="6.70" height="5.30" fill="#e4200c" />
<line x1="502.32" y1="114.80" x2="502.32" y2="234.50" stroke="#e4200c" stroke-width="1" opacity="0.8"/>
<rect x="498.97" y="149.00" width="6.70" height="85.50" fill="#e4200c" />
<line x1="510.81" y1="135.70" x2="510.81" y2="160.20" stroke="#1a5fd0" stroke-width="1" opacity="0.8"/>
<rect x="507.46" y="138.30" width="6.70" height="11.70" fill="#1a5fd0" />
<line x1="519.31" y1="139.40" x2="519.31" y2="162.30" stroke="#1a5fd0" stroke-width="1" opacity="0.8"/>
<rect x="515.96" y="141.40" width="6.70" height="8.60" fill="#1a5fd0" />
<line x1="527.80" y1="159.20" x2="527.80" y2="181.70" stroke="#e4200c" stroke-width="1" opacity="0.8"/>
<rect x="524.45" y="167.20" width="6.70" height="9.20" fill="#e4200c" />
<line x1="536.29" y1="151.80" x2="536.29" y2="180.70" stroke="#e4200c" stroke-width="1" opacity="0.8"/>
<rect x="532.94" y="166.00" width="6.70" height="1.40" fill="#e4200c" />
<line x1="544.78" y1="162.70" x2="544.78" y2="176.80" stroke="#e4200c" stroke-width="1" opacity="0.8"/>
<rect x="541.43" y="162.70" width="6.70" height="14.10" fill="#e4200c" />
<line x1="553.28" y1="152.00" x2="553.28" y2="172.00" stroke="#e4200c" stroke-width="1" opacity="0.8"/>
<rect x="549.93" y="155.10" width="6.70" height="5.60" fill="#e4200c" />
<line x1="561.77" y1="142.80" x2="561.77" y2="179.60" stroke="#1a5fd0" stroke-width="1" opacity="0.8"/>
<rect x="558.42" y="158.20" width="6.70" height="21.40" fill="#1a5fd0" />
<line x1="570.26" y1="164.40" x2="570.26" y2="180.40" stroke="#e4200c" stroke-width="1" opacity="0.8"/>
<rect x="566.91" y="174.00" width="6.70" height="6.00" fill="#e4200c" />
<line x1="578.75" y1="152.20" x2="578.75" y2="178.00" stroke="#e4200c" stroke-width="1" opacity="0.8"/>
<rect x="575.40" y="172.15" width="6.70" height="1.40" fill="#e4200c" />
<line x1="587.25" y1="157.30" x2="587.25" y2="168.40" stroke="#e4200c" stroke-width="1" opacity="0.8"/>
<rect x="583.90" y="165.75" width="6.70" height="1.40" fill="#e4200c" />
<line x1="595.74" y1="160.80" x2="595.74" y2="174.60" stroke="#1a5fd0" stroke-width="1" opacity="0.8"/>
<rect x="592.39" y="166.20" width="6.70" height="5.20" fill="#1a5fd0" />
<line x1="604.23" y1="161.10" x2="604.23" y2="174.80" stroke="#e4200c" stroke-width="1" opacity="0.8"/>
<rect x="600.88" y="162.60" width="6.70" height="11.20" fill="#e4200c" />
<line x1="612.72" y1="105.90" x2="612.72" y2="170.70" stroke="#e4200c" stroke-width="1" opacity="0.8"/>
<rect x="609.37" y="120.00" width="6.70" height="41.50" fill="#e4200c" />
<line x1="621.22" y1="117.60" x2="621.22" y2="136.60" stroke="#1a5fd0" stroke-width="1" opacity="0.8"/>
<rect x="617.87" y="119.20" width="6.70" height="10.20" fill="#1a5fd0" />
<line x1="629.71" y1="98.10" x2="629.71" y2="142.10" stroke="#1a5fd0" stroke-width="1" opacity="0.8"/>
<rect x="626.36" y="124.30" width="6.70" height="7.20" fill="#1a5fd0" />
<line x1="638.20" y1="117.60" x2="638.20" y2="147.20" stroke="#1a5fd0" stroke-width="1" opacity="0.8"/>
<rect x="634.85" y="131.90" width="6.70" height="9.80" fill="#1a5fd0" />
<polygon points="510.8,161.2 515.0,164.8 515.0,172.0 506.6,172.0 506.6,164.8" fill="#ffffff" stroke="#ee2a3a" stroke-width="1" />
<text x="510.81" y="171.00" font-size="9" fill="#ee2a3a" text-anchor="middle" >B</text>
<polygon points="527.8,181.7 532.0,185.3 532.0,192.5 523.6,192.5 523.6,185.3" fill="#ffffff" stroke="#ee2a3a" stroke-width="1" />
<text x="527.80" y="191.50" font-size="9" fill="#ee2a3a" text-anchor="middle" >B</text>
<polygon points="536.3,180.3 540.5,183.9 540.5,189.9 532.1,189.9 532.1,183.9" fill="#ffffff" stroke="#ee2a3a" stroke-width="1" />
<text x="536.29" y="188.90" font-size="9" fill="#ee2a3a" text-anchor="middle" >B</text>
<polygon points="544.8,176.2 549.0,179.8 549.0,187.0 540.6,187.0 540.6,179.8" fill="#ffffff" stroke="#ee2a3a" stroke-width="1" />
<text x="544.78" y="186.00" font-size="9" fill="#ee2a3a" text-anchor="middle" >B</text>
<polygon points="561.8,179.7 566.0,183.3 566.0,188.9 557.6,188.9 557.6,183.3" fill="#ffffff" stroke="#ee2a3a" stroke-width="1" />
<text x="561.77" y="187.90" font-size="9" fill="#ee2a3a" text-anchor="middle" >B</text>
<polygon points="544.8,159.6 549.1,155.8 549.1,147.4 540.5,147.4 540.5,155.8" fill="#ffffff" stroke="#2a2ae8" stroke-width="1" />
<text x="544.78" y="155.40" font-size="9" fill="#2a2ae8" text-anchor="middle" >S</text>
<polygon points="587.2,157.4 591.5,153.6 591.5,145.2 582.9,145.2 582.9,153.6" fill="#ffffff" stroke="#2a2ae8" stroke-width="1" />
<text x="587.25" y="153.20" font-size="9" fill="#2a2ae8" text-anchor="middle" >S</text>
<polygon points="612.7,146.2 617.0,142.4 617.0,134.0 608.4,134.0 608.4,142.4" fill="#ffffff" stroke="#2a2ae8" stroke-width="1" />
<text x="612.72" y="142.00" font-size="9" fill="#2a2ae8" text-anchor="middle" >S</text>
<polygon points="604.2,176.2 608.4,179.8 608.4,187.0 600.0,187.0 600.0,179.8" fill="#ffffff" stroke="#ee2a3a" stroke-width="1" />
<text x="604.23" y="186.00" font-size="9" fill="#ee2a3a" text-anchor="middle" >B</text>
<rect x="8.30" y="84.20" width="3.20" height="4.40" fill="#d8d8d8" stroke="#8a8a8a" stroke-width="0.9" />
<rect x="13.40" y="81.00" width="49.30" height="10.80" fill="#dcdcdc" rx="1.5"/>
<text x="16.50" y="90.20" font-size="9.77" fill="#111" textLength="43.50" lengthAdjust="spacingAndGlyphs" >보성파워텍</text>
<rect x="65.60" y="84.20" width="3.20" height="4.40" fill="#d8d8d8" stroke="#8a8a8a" stroke-width="0.9" />
<text x="74.00" y="90.20" font-size="9.77" fill="#f03cc8" textLength="37.00" lengthAdjust="spacingAndGlyphs" >종가 단순</text>
<text x="115.00" y="90.20" font-size="10.5" fill="#f03cc8" textLength="5.00" lengthAdjust="spacingAndGlyphs" >5</text>
<text x="126.50" y="90.20" font-size="10.5" fill="#4a6ad8" textLength="9.50" lengthAdjust="spacingAndGlyphs" >10</text>
<text x="140.00" y="90.20" font-size="10.5" fill="#f0a818" textLength="9.50" lengthAdjust="spacingAndGlyphs" >20</text>
<text x="154.80" y="90.20" font-size="10.5" fill="#3fae5c" textLength="9.50" lengthAdjust="spacingAndGlyphs" >60</text>
<text x="171.00" y="90.20" font-size="10.5" fill="#7e7e7e" textLength="13.50" lengthAdjust="spacingAndGlyphs" >120</text>
<rect x="9.80" y="95.30" width="9.80" height="9.40" fill="#e4e4e4" stroke="#444" stroke-width="1.5" />
<line x1="13.03" y1="95.20" x2="13.03" y2="104.80" stroke="#888" stroke-width="0.8" />
<line x1="9.70" y1="98.40" x2="19.70" y2="98.40" stroke="#888" stroke-width="0.8" />
<line x1="16.36" y1="95.20" x2="16.36" y2="104.80" stroke="#888" stroke-width="0.8" />
<line x1="9.70" y1="101.60" x2="19.70" y2="101.60" stroke="#888" stroke-width="0.8" />
<line x1="5.50" y1="299.00" x2="737.50" y2="299.00" stroke="#8f8f8f" stroke-width="1" />
<rect x="6.40" y="405.30" width="6.70" height="1.60" fill="#e4200c" />
<rect x="14.89" y="405.90" width="6.70" height="1.00" fill="#1a5fd0" />
<rect x="23.39" y="406.10" width="6.70" height="0.80" fill="#1a5fd0" />
<rect x="31.88" y="406.10" width="6.70" height="0.80" fill="#1a5fd0" />
<rect x="40.37" y="405.70" width="6.70" height="1.20" fill="#e4200c" />
<rect x="48.86" y="405.90" width="6.70" height="1.00" fill="#1a5fd0" />
<rect x="57.36" y="406.10" width="6.70" height="0.80" fill="#1a5fd0" />
<rect x="65.85" y="406.10" width="6.70" height="0.80" fill="#1a5fd0" />
<rect x="74.34" y="405.70" width="6.70" height="1.20" fill="#e4200c" />
<rect x="82.83" y="395.10" width="6.70" height="11.80" fill="#e4200c" />
<rect x="91.33" y="404.90" width="6.70" height="2.00" fill="#1a5fd0" />
<rect x="99.82" y="403.40" width="6.70" height="3.50" fill="#e4200c" />
<rect x="108.31" y="402.20" width="6.70" height="4.70" fill="#e4200c" />
<rect x="116.80" y="403.90" width="6.70" height="3.00" fill="#1a5fd0" />
<rect x="125.30" y="390.40" width="6.70" height="16.50" fill="#e4200c" />
<rect x="133.79" y="403.50" width="6.70" height="3.40" fill="#1a5fd0" />
<rect x="142.28" y="403.50" width="6.70" height="3.40" fill="#1a5fd0" />
<rect x="150.77" y="405.30" width="6.70" height="1.60" fill="#1a5fd0" />
<rect x="159.27" y="405.40" width="6.70" height="1.50" fill="#1a5fd0" />
<rect x="167.76" y="405.40" width="6.70" height="1.50" fill="#1a5fd0" />
<rect x="176.25" y="405.50" width="6.70" height="1.40" fill="#e4200c" />
<rect x="184.74" y="405.70" width="6.70" height="1.20" fill="#e4200c" />
<rect x="193.24" y="405.40" width="6.70" height="1.50" fill="#1a5fd0" />
<rect x="201.73" y="405.40" width="6.70" height="1.50" fill="#1a5fd0" />
<rect x="210.22" y="405.40" width="6.70" height="1.50" fill="#1a5fd0" />
<rect x="218.72" y="405.40" width="6.70" height="1.50" fill="#1a5fd0" />
<rect x="227.21" y="405.60" width="6.70" height="1.30" fill="#a054c4" />
<rect x="235.70" y="405.60" width="6.70" height="1.30" fill="#a054c4" />
<rect x="244.19" y="405.60" width="6.70" height="1.30" fill="#a054c4" />
<rect x="252.69" y="405.60" width="6.70" height="1.30" fill="#a054c4" />
<rect x="261.18" y="405.60" width="6.70" height="1.30" fill="#a054c4" />
<rect x="269.67" y="405.60" width="6.70" height="1.30" fill="#a054c4" />
<rect x="278.16" y="405.60" width="6.70" height="1.30" fill="#a054c4" />
<rect x="286.66" y="405.60" width="6.70" height="1.30" fill="#a054c4" />
<rect x="295.15" y="405.60" width="6.70" height="1.30" fill="#a054c4" />
<rect x="303.64" y="406.00" width="6.70" height="0.90" fill="#dcb880" />
<rect x="312.13" y="406.00" width="6.70" height="0.90" fill="#dcb880" />
<rect x="320.63" y="406.00" width="6.70" height="0.90" fill="#dcb880" />
<rect x="329.12" y="406.00" width="6.70" height="0.90" fill="#dcb880" />
<rect x="337.61" y="406.00" width="6.70" height="0.90" fill="#dcb880" />
<rect x="346.10" y="406.00" width="6.70" height="0.90" fill="#dcb880" />
<rect x="354.60" y="406.00" width="6.70" height="0.90" fill="#dcb880" />
<rect x="363.09" y="406.00" width="6.70" height="0.90" fill="#dcb880" />
<rect x="371.58" y="406.00" width="6.70" height="0.90" fill="#dcb880" />
<rect x="380.07" y="406.00" width="6.70" height="0.90" fill="#dcb880" />
<rect x="388.57" y="406.00" width="6.70" height="0.90" fill="#dcb880" />
<rect x="397.06" y="406.00" width="6.70" height="0.90" fill="#dcb880" />
<rect x="405.55" y="406.00" width="6.70" height="0.90" fill="#dcb880" />
<rect x="414.04" y="406.00" width="6.70" height="0.90" fill="#dcb880" />
<rect x="422.54" y="406.00" width="6.70" height="0.90" fill="#dcb880" />
<rect x="431.03" y="406.00" width="6.70" height="0.90" fill="#dcb880" />
<rect x="439.52" y="406.00" width="6.70" height="0.90" fill="#dcb880" />
<rect x="448.02" y="406.00" width="6.70" height="0.90" fill="#dcb880" />
<rect x="456.51" y="406.00" width="6.70" height="0.90" fill="#dcb880" />
<rect x="465.00" y="389.60" width="6.70" height="17.30" fill="#e4200c" />
<rect x="473.49" y="401.90" width="6.70" height="5.00" fill="#1a5fd0" />
<rect x="481.99" y="404.40" width="6.70" height="2.50" fill="#1a5fd0" />
<rect x="490.48" y="403.90" width="6.70" height="3.00" fill="#e4200c" />
<rect x="498.97" y="312.70" width="6.70" height="94.20" fill="#e4200c" />
<rect x="507.46" y="377.10" width="6.70" height="29.80" fill="#1a5fd0" />
<rect x="515.96" y="389.60" width="6.70" height="17.30" fill="#1a5fd0" />
<rect x="524.45" y="396.20" width="6.70" height="10.70" fill="#1a5fd0" />
<rect x="532.94" y="394.20" width="6.70" height="12.70" fill="#e4200c" />
<rect x="541.43" y="401.30" width="6.70" height="5.60" fill="#1a5fd0" />
<rect x="549.93" y="399.80" width="6.70" height="7.10" fill="#e4200c" />
<rect x="558.42" y="399.30" width="6.70" height="7.60" fill="#1a5fd0" />
<rect x="566.91" y="401.90" width="6.70" height="5.00" fill="#1a5fd0" />
<rect x="575.40" y="399.80" width="6.70" height="7.10" fill="#e4200c" />
<rect x="583.90" y="396.70" width="6.70" height="10.20" fill="#e4200c" />
<rect x="592.39" y="403.60" width="6.70" height="3.30" fill="#1a5fd0" />
<rect x="600.88" y="402.60" width="6.70" height="4.30" fill="#e4200c" />
<rect x="609.37" y="350.90" width="6.70" height="56.00" fill="#e4200c" />
<rect x="617.87" y="396.70" width="6.70" height="10.20" fill="#1a5fd0" />
<rect x="626.36" y="388.30" width="6.70" height="18.60" fill="#e4200c" />
<rect x="634.85" y="399.80" width="6.70" height="7.10" fill="#1a5fd0" />
<polyline points="6.0,405.8 100.0,405.3 163.0,404.9 252.0,404.7 379.0,404.7 384.0,405.7 460.0,405.6 494.0,404.9 502.6,403.4 510.5,402.6 560.0,402.3 570.0,401.3 604.0,401.3 612.5,400.8 638.0,400.6" fill="none" stroke="#3fae5c" stroke-width="1" stroke-linejoin="round" clip-path="url(#vc)"/>
<polyline points="6.0,404.8 40.0,404.8 44.0,405.5 72.0,405.5 76.0,404.7 86.0,404.0 100.0,403.8 128.0,403.5 165.0,403.9 251.7,404.0 256.0,405.7 460.0,405.9 494.0,404.4 502.6,398.8 510.5,397.5 519.4,396.7 536.0,396.7 553.0,396.2 570.0,396.2 580.0,395.5 595.0,394.7 604.0,394.2 612.5,391.6 621.0,391.2 638.0,390.9" fill="none" stroke="#f0a818" stroke-width="1" stroke-linejoin="round" clip-path="url(#vc)"/>
<polyline points="9.6,402.6 20.0,402.6 24.4,403.7 30.0,405.3 78.0,405.3 86.1,402.8 100.0,402.8 107.6,401.6 162.7,401.6 167.4,404.2 175.0,405.8 455.0,405.8 462.0,404.0 466.5,401.8 494.5,401.8 502.6,382.7 510.5,381.0 519.4,378.4 527.6,376.4 536.0,374.6 544.6,391.6 553.0,395.5 561.9,397.5 570.0,399.3 578.5,400.6 604.0,401.0 612.5,391.1 620.9,389.6 629.8,388.3 638.0,387.8" fill="none" stroke="#f03cc8" stroke-width="1" stroke-linejoin="round" clip-path="url(#vc)"/>
<rect x="8.30" y="302.20" width="3.20" height="4.40" fill="#d8d8d8" stroke="#8a8a8a" stroke-width="0.9" />
<text x="16.70" y="308.60" font-size="9.77" fill="#2a9c9c" textLength="26.50" lengthAdjust="spacingAndGlyphs" >거래량</text>
<text x="49.80" y="308.60" font-size="9.77" fill="#f03cc8" textLength="24.30" lengthAdjust="spacingAndGlyphs" >단순 5</text>
<text x="80.80" y="308.60" font-size="10.5" fill="#f0a818" textLength="9.50" lengthAdjust="spacingAndGlyphs" >20</text>
<text x="95.60" y="308.60" font-size="10.5" fill="#3fae5c" textLength="9.50" lengthAdjust="spacingAndGlyphs" >60</text>
<text x="111.00" y="308.60" font-size="10.5" fill="#7e7e7e" textLength="13.00" lengthAdjust="spacingAndGlyphs" >120</text>
<rect x="128.00" y="302.20" width="3.20" height="4.40" fill="#d8d8d8" stroke="#8a8a8a" stroke-width="0.9" />
<text x="136.00" y="308.60" font-size="9.77" fill="#5a5cae" textLength="34.20" lengthAdjust="spacingAndGlyphs" >거래대금</text>
<text x="9.40" y="319.20" font-size="9.77" fill="#3a3a3a" textLength="82.00" lengthAdjust="spacingAndGlyphs" >4,475,177주(38.88%)</text>
<line x1="688.80" y1="80.00" x2="688.80" y2="421.60" stroke="#8f8f8f" stroke-width="1" />
<line x1="688.80" y1="98.10" x2="693.40" y2="98.10" stroke="#777" stroke-width="1" />
<line x1="688.80" y1="127.80" x2="693.40" y2="127.80" stroke="#777" stroke-width="1" />
<text x="694.50" y="131.00" font-size="10.5" fill="#626262" textLength="21.50" lengthAdjust="spacingAndGlyphs" >4,250</text>
<line x1="688.80" y1="157.40" x2="693.40" y2="157.40" stroke="#777" stroke-width="1" />
<text x="694.50" y="160.60" font-size="10.5" fill="#626262" textLength="21.50" lengthAdjust="spacingAndGlyphs" >4,000</text>
<line x1="688.80" y1="187.10" x2="693.40" y2="187.10" stroke="#777" stroke-width="1" />
<text x="694.50" y="190.30" font-size="10.5" fill="#626262" textLength="21.50" lengthAdjust="spacingAndGlyphs" >3,750</text>
<line x1="688.80" y1="216.70" x2="693.40" y2="216.70" stroke="#777" stroke-width="1" />
<text x="694.50" y="219.90" font-size="10.5" fill="#626262" textLength="21.50" lengthAdjust="spacingAndGlyphs" >3,500</text>
<line x1="688.80" y1="246.50" x2="693.40" y2="246.50" stroke="#777" stroke-width="1" />
<text x="694.50" y="249.70" font-size="10.5" fill="#626262" textLength="21.50" lengthAdjust="spacingAndGlyphs" >3,250</text>
<line x1="688.80" y1="276.30" x2="693.40" y2="276.30" stroke="#777" stroke-width="1" />
<text x="694.50" y="279.50" font-size="10.5" fill="#626262" textLength="21.50" lengthAdjust="spacingAndGlyphs" >3,000</text>
<line x1="688.80" y1="104.03" x2="690.80" y2="104.03" stroke="#9aa6b8" stroke-width="1" />
<line x1="688.80" y1="109.96" x2="690.80" y2="109.96" stroke="#9aa6b8" stroke-width="1" />
<line x1="688.80" y1="115.89" x2="690.80" y2="115.89" stroke="#9aa6b8" stroke-width="1" />
<line x1="688.80" y1="121.82" x2="690.80" y2="121.82" stroke="#9aa6b8" stroke-width="1" />
<line x1="688.80" y1="133.68" x2="690.80" y2="133.68" stroke="#9aa6b8" stroke-width="1" />
<line x1="688.80" y1="139.61" x2="690.80" y2="139.61" stroke="#9aa6b8" stroke-width="1" />
<line x1="688.80" y1="145.54" x2="690.80" y2="145.54" stroke="#9aa6b8" stroke-width="1" />
<line x1="688.80" y1="151.47" x2="690.80" y2="151.47" stroke="#9aa6b8" stroke-width="1" />
<line x1="688.80" y1="163.33" x2="690.80" y2="163.33" stroke="#9aa6b8" stroke-width="1" />
<line x1="688.80" y1="169.26" x2="690.80" y2="169.26" stroke="#9aa6b8" stroke-width="1" />
<line x1="688.80" y1="175.19" x2="690.80" y2="175.19" stroke="#9aa6b8" stroke-width="1" />
<line x1="688.80" y1="181.12" x2="690.80" y2="181.12" stroke="#9aa6b8" stroke-width="1" />
<line x1="688.80" y1="192.98" x2="690.80" y2="192.98" stroke="#9aa6b8" stroke-width="1" />
<line x1="688.80" y1="198.91" x2="690.80" y2="198.91" stroke="#9aa6b8" stroke-width="1" />
<line x1="688.80" y1="204.84" x2="690.80" y2="204.84" stroke="#9aa6b8" stroke-width="1" />
<line x1="688.80" y1="210.77" x2="690.80" y2="210.77" stroke="#9aa6b8" stroke-width="1" />
<line x1="688.80" y1="222.63" x2="690.80" y2="222.63" stroke="#9aa6b8" stroke-width="1" />
<line x1="688.80" y1="228.56" x2="690.80" y2="228.56" stroke="#9aa6b8" stroke-width="1" />
<line x1="688.80" y1="234.49" x2="690.80" y2="234.49" stroke="#9aa6b8" stroke-width="1" />
<line x1="688.80" y1="240.42" x2="690.80" y2="240.42" stroke="#9aa6b8" stroke-width="1" />
<line x1="688.80" y1="252.28" x2="690.80" y2="252.28" stroke="#9aa6b8" stroke-width="1" />
<line x1="688.80" y1="258.21" x2="690.80" y2="258.21" stroke="#9aa6b8" stroke-width="1" />
<line x1="688.80" y1="264.14" x2="690.80" y2="264.14" stroke="#9aa6b8" stroke-width="1" />
<line x1="688.80" y1="270.07" x2="690.80" y2="270.07" stroke="#9aa6b8" stroke-width="1" />
<line x1="688.80" y1="281.93" x2="690.80" y2="281.93" stroke="#9aa6b8" stroke-width="1" />
<line x1="688.80" y1="287.86" x2="690.80" y2="287.86" stroke="#9aa6b8" stroke-width="1" />
<clipPath id="c45"><rect x="689" y="99.7" width="48" height="3"/></clipPath>
<text x="694.50" y="101.30" font-size="10.5" fill="#626262" textLength="21.50" lengthAdjust="spacingAndGlyphs" clip-path="url(#c45)">4,500</text>
<text x="689.80" y="89.80" font-size="10.5" fill="#e0301e" textLength="35.50" lengthAdjust="spacingAndGlyphs" >LC:41.30</text>
<text x="689.80" y="98.60" font-size="10.5" fill="#2a5bd0" textLength="35.50" lengthAdjust="spacingAndGlyphs" >HC:-7.90</text>
<rect x="692.30" y="135.80" width="43.40" height="9.40" fill="#1f57cc" />
<text x="694.50" y="144.20" font-size="10.5" fill="#ffffff" textLength="21.50" lengthAdjust="spacingAndGlyphs" >4,140</text>
<text x="694.50" y="152.80" font-size="10.5" fill="#2a5bd0" textLength="27.00" lengthAdjust="spacingAndGlyphs" >-1.90%</text>
<line x1="688.80" y1="311.50" x2="693.40" y2="311.50" stroke="#777" stroke-width="1" />
<text x="694.50" y="314.30" font-size="10.5" fill="#626262" textLength="32.00" lengthAdjust="spacingAndGlyphs" >60,000K</text>
<line x1="688.80" y1="343.40" x2="693.40" y2="343.40" stroke="#777" stroke-width="1" />
<text x="694.50" y="346.20" font-size="10.5" fill="#626262" textLength="32.00" lengthAdjust="spacingAndGlyphs" >40,000K</text>
<line x1="688.80" y1="375.50" x2="693.40" y2="375.50" stroke="#777" stroke-width="1" />
<text x="694.50" y="378.30" font-size="10.5" fill="#626262" textLength="32.00" lengthAdjust="spacingAndGlyphs" >20,000K</text>
<line x1="688.80" y1="317.89" x2="690.80" y2="317.89" stroke="#9aa6b8" stroke-width="1" />
<line x1="688.80" y1="324.28" x2="690.80" y2="324.28" stroke="#9aa6b8" stroke-width="1" />
<line x1="688.80" y1="330.67" x2="690.80" y2="330.67" stroke="#9aa6b8" stroke-width="1" />
<line x1="688.80" y1="337.06" x2="690.80" y2="337.06" stroke="#9aa6b8" stroke-width="1" />
<line x1="688.80" y1="349.84" x2="690.80" y2="349.84" stroke="#9aa6b8" stroke-width="1" />
<line x1="688.80" y1="356.23" x2="690.80" y2="356.23" stroke="#9aa6b8" stroke-width="1" />
<line x1="688.80" y1="362.62" x2="690.80" y2="362.62" stroke="#9aa6b8" stroke-width="1" />
<line x1="688.80" y1="369.01" x2="690.80" y2="369.01" stroke="#9aa6b8" stroke-width="1" />
<line x1="688.80" y1="381.79" x2="690.80" y2="381.79" stroke="#9aa6b8" stroke-width="1" />
<line x1="688.80" y1="388.18" x2="690.80" y2="388.18" stroke="#9aa6b8" stroke-width="1" />
<line x1="688.80" y1="394.57" x2="690.80" y2="394.57" stroke="#9aa6b8" stroke-width="1" />
<line x1="688.80" y1="400.96" x2="690.80" y2="400.96" stroke="#9aa6b8" stroke-width="1" />
<rect x="692.00" y="389.10" width="43.20" height="8.30" fill="#1f57cc" />
<text x="694.50" y="396.80" font-size="10.5" fill="#ffffff" textLength="25.50" lengthAdjust="spacingAndGlyphs" >4,475K</text>
<text x="694.50" y="405.80" font-size="10.5" fill="#2a5bd0" textLength="25.50" lengthAdjust="spacingAndGlyphs" >38.88%</text>
<rect x="728.60" y="302.00" width="6.20" height="5.60" fill="#555" />
<line x1="730.00" y1="303.30" x2="733.40" y2="306.30" stroke="#fff" stroke-width="0.9" />
<line x1="733.40" y1="303.30" x2="730.00" y2="306.30" stroke="#fff" stroke-width="0.9" />
<line x1="5.50" y1="408.00" x2="737.50" y2="408.00" stroke="#8f8f8f" stroke-width="1" />
<text x="7.00" y="418.30" font-size="10.5" fill="#626262" textLength="31.00" lengthAdjust="spacingAndGlyphs" >2025/05</text>
<line x1="192.80" y1="408.00" x2="192.80" y2="420.60" stroke="#8f8f8f" stroke-width="1" />
<text x="193.80" y="418.30" font-size="10.5" fill="#626262" textLength="9.50" lengthAdjust="spacingAndGlyphs" >07</text>
<line x1="389.00" y1="408.00" x2="389.00" y2="420.60" stroke="#8f8f8f" stroke-width="1" />
<text x="390.00" y="418.30" font-size="10.5" fill="#626262" textLength="9.50" lengthAdjust="spacingAndGlyphs" >08</text>
<line x1="558.80" y1="408.00" x2="558.80" y2="420.60" stroke="#8f8f8f" stroke-width="1" />
<text x="559.80" y="418.30" font-size="10.5" fill="#626262" textLength="9.50" lengthAdjust="spacingAndGlyphs" >09</text>
<text x="694.50" y="418.30" font-size="10.5" fill="#626262" textLength="23.00" lengthAdjust="spacingAndGlyphs" >09/12</text>
<line x1="5.50" y1="421.60" x2="737.50" y2="421.60" stroke="#a9a9a9" stroke-width="1" />
<line x1="5.50" y1="80.00" x2="737.50" y2="80.00" stroke="#5c5c5c" stroke-width="1" />
<line x1="5.50" y1="80.00" x2="5.50" y2="421.60" stroke="#8f8f8f" stroke-width="1" />
<line x1="737.50" y1="80.00" x2="737.50" y2="421.60" stroke="#9f9f9f" stroke-width="1" />
<rect x="5.50" y="421.80" width="732.00" height="13.20" fill="#f4f4f4" />
<rect x="5.50" y="421.80" width="12.30" height="12.80" fill="#f1f1f1" />
<line x1="5.50" y1="422.30" x2="17.80" y2="422.30" stroke="#ffffff" stroke-width="1" />
<line x1="6.00" y1="421.80" x2="6.00" y2="434.60" stroke="#ffffff" stroke-width="1" />
<line x1="5.50" y1="434.10" x2="17.80" y2="434.10" stroke="#8f8f8f" stroke-width="1" />
<line x1="17.30" y1="421.80" x2="17.30" y2="434.60" stroke="#8f8f8f" stroke-width="1" />
<polygon points="8.9,428.5 12.2,425.7 12.2,431.3" fill="#111" />
<rect x="462.30" y="421.90" width="12.00" height="12.50" fill="#f1f1f1" />
<line x1="462.30" y1="422.40" x2="474.30" y2="422.40" stroke="#ffffff" stroke-width="1" />
<line x1="462.80" y1="421.90" x2="462.80" y2="434.40" stroke="#ffffff" stroke-width="1" />
<line x1="462.30" y1="433.90" x2="474.30" y2="433.90" stroke="#8f8f8f" stroke-width="1" />
<line x1="473.80" y1="421.90" x2="473.80" y2="434.40" stroke="#8f8f8f" stroke-width="1" />
<polygon points="470.3,428.0 466.6,425.0 466.6,431.0" fill="#111" />
<rect x="474.60" y="421.90" width="12.00" height="12.50" fill="#f1f1f1" />
<line x1="474.60" y1="422.40" x2="486.60" y2="422.40" stroke="#ffffff" stroke-width="1" />
<line x1="475.10" y1="421.90" x2="475.10" y2="434.40" stroke="#ffffff" stroke-width="1" />
<line x1="474.60" y1="433.90" x2="486.60" y2="433.90" stroke="#8f8f8f" stroke-width="1" />
<line x1="486.10" y1="421.90" x2="486.10" y2="434.40" stroke="#8f8f8f" stroke-width="1" />
<polygon points="480.6,425.3 480.6,430.7 477.0,428.0" fill="#111" />
<polygon points="484.4,425.3 484.4,430.7 480.8,428.0" fill="#111" />
<rect x="486.90" y="421.90" width="12.00" height="12.50" fill="#f1f1f1" />
<line x1="486.90" y1="422.40" x2="498.90" y2="422.40" stroke="#ffffff" stroke-width="1" />
<line x1="487.40" y1="421.90" x2="487.40" y2="434.40" stroke="#ffffff" stroke-width="1" />
<line x1="486.90" y1="433.90" x2="498.90" y2="433.90" stroke="#8f8f8f" stroke-width="1" />
<line x1="498.40" y1="421.90" x2="498.40" y2="434.40" stroke="#8f8f8f" stroke-width="1" />
<rect x="490.20" y="425.30" width="5.40" height="5.40" fill="#111" />
<rect x="499.20" y="421.90" width="12.00" height="12.50" fill="#f1f1f1" />
<line x1="499.20" y1="422.40" x2="511.20" y2="422.40" stroke="#ffffff" stroke-width="1" />
<line x1="499.70" y1="421.90" x2="499.70" y2="434.40" stroke="#ffffff" stroke-width="1" />
<line x1="499.20" y1="433.90" x2="511.20" y2="433.90" stroke="#8f8f8f" stroke-width="1" />
<line x1="510.70" y1="421.90" x2="510.70" y2="434.40" stroke="#8f8f8f" stroke-width="1" />
<polygon points="501.6,425.3 501.6,430.7 505.2,428.0" fill="#111" />
<polygon points="505.4,425.3 505.4,430.7 509.0,428.0" fill="#111" />
<line x1="517.60" y1="425.80" x2="568.00" y2="425.80" stroke="#9a9a9a" stroke-width="1.2" />
<polygon points="524.0,423.0 527.5,423.0 527.5,429.0 525.7,431.0 524.0,429.0" fill="#e8e8e8" stroke="#666" stroke-width="0.8" />
<rect x="517.60" y="432.20" width="0.90" height="1.60" fill="#666" />
<rect x="522.60" y="432.20" width="0.90" height="1.60" fill="#666" />
<rect x="527.60" y="432.20" width="0.90" height="1.60" fill="#666" />
<rect x="532.60" y="432.20" width="0.90" height="1.60" fill="#666" />
<rect x="537.60" y="432.20" width="0.90" height="1.60" fill="#666" />
<rect x="542.60" y="432.20" width="0.90" height="1.60" fill="#666" />
<rect x="547.60" y="432.20" width="0.90" height="1.60" fill="#666" />
<rect x="552.60" y="432.20" width="0.90" height="1.60" fill="#666" />
<rect x="557.60" y="432.20" width="0.90" height="1.60" fill="#666" />
<rect x="562.60" y="432.20" width="0.90" height="1.60" fill="#666" />
<rect x="567.60" y="432.20" width="0.90" height="1.60" fill="#666" />
<rect x="574.50" y="424.00" width="7.00" height="6.00" fill="#f8f8f8" stroke="#8c8c8c" stroke-width="1" />
<rect x="579.50" y="428.50" width="5.00" height="4.60" fill="#f8f8f8" stroke="#8c8c8c" stroke-width="1" />
<line x1="582.00" y1="428.50" x2="582.00" y2="433.00" stroke="#8c8c8c" stroke-width="0.7" />
<line x1="579.50" y1="430.80" x2="584.50" y2="430.80" stroke="#8c8c8c" stroke-width="0.7" />
<rect x="587.80" y="424.00" width="6.20" height="5.50" fill="#f8f8f8" stroke="#8c8c8c" stroke-width="1" />
<rect x="590.60" y="426.80" width="6.20" height="5.80" fill="#f8f8f8" stroke="#8c8c8c" stroke-width="1" />
<rect x="600.50" y="424.00" width="9.50" height="9.00" fill="none" stroke="#8c8c8c" stroke-width="1" stroke-dasharray="1.2,1"/>
<polyline points="601.5,430.0 604.0,427.5 606.0,429.5 609.0,426.0" fill="none" stroke="#8c8c8c" stroke-width="0.9" stroke-linejoin="round" />
<line x1="612.00" y1="422.50" x2="612.00" y2="434.00" stroke="#c2c2c2" stroke-width="1" />
<rect x="613.00" y="422.50" width="11.00" height="11.50" fill="#ffffff" stroke="#c8c8c8" stroke-width="0.8" />
<polygon points="615.2,425.0 615.2,431.5 617.0,429.8 618.6,432.6 619.6,432.0 618.2,429.4 620.4,429.2" fill="#777" />
<line x1="615.00" y1="424.50" x2="622.00" y2="424.50" stroke="#777" stroke-width="1" />
<line x1="625.50" y1="426.00" x2="635.00" y2="426.00" stroke="#8c8c8c" stroke-width="1" />
<polyline points="626.0,432.0 629.0,428.5 631.0,430.5 634.5,427.0" fill="none" stroke="#8c8c8c" stroke-width="0.9" stroke-linejoin="round" />
<line x1="640.50" y1="423.50" x2="640.50" y2="433.50" stroke="#8c8c8c" stroke-width="1" />
<polyline points="638.0,431.0 640.5,427.0 643.0,430.5 646.0,426.5" fill="none" stroke="#8c8c8c" stroke-width="0.9" stroke-linejoin="round" />
<polyline points="650.0,432.5 653.5,427.0 656.0,430.0 660.0,424.5" fill="none" stroke="#8c8c8c" stroke-width="1.2" stroke-linejoin="round" />
<polyline points="651.0,433.0 655.0,430.5 659.5,432.0" fill="none" stroke="#8c8c8c" stroke-width="0.8" stroke-linejoin="round" />
<rect x="664.00" y="425.50" width="6.00" height="5.00" fill="#f8f8f8" stroke="#8c8c8c" stroke-width="1" />
<rect x="667.50" y="429.00" width="4.60" height="4.00" fill="#8c8c8c" />
<rect x="676.00" y="426.20" width="8.00" height="6.60" fill="#f8f8f8" stroke="#8c8c8c" stroke-width="1" />
<rect x="678.00" y="424.00" width="6.50" height="2.60" fill="#f8f8f8" stroke="#8c8c8c" stroke-width="0.9" />
<line x1="677.50" y1="429.60" x2="682.50" y2="429.60" stroke="#8c8c8c" stroke-width="1" />
<circle cx="692.6" cy="426.8" r="3.1" fill="none" stroke="#666" stroke-width="1.1"/>
<line x1="694.80" y1="429.20" x2="698.00" y2="433.00" stroke="#666" stroke-width="1.3" />
<rect x="703.00" y="428.20" width="7.20" height="1.50" fill="#6a6a6a" />
<rect x="715.00" y="428.20" width="8.00" height="1.60" fill="#5a5a5a" />
<rect x="718.20" y="425.00" width="1.60" height="8.00" fill="#5a5a5a" />
<text x="731.50" y="433.00" font-size="10.5" fill="#6a6a6a" text-anchor="middle" textLength="7.00" lengthAdjust="spacingAndGlyphs" font-weight="bold" >A</text>
</svg>
</body></html>
